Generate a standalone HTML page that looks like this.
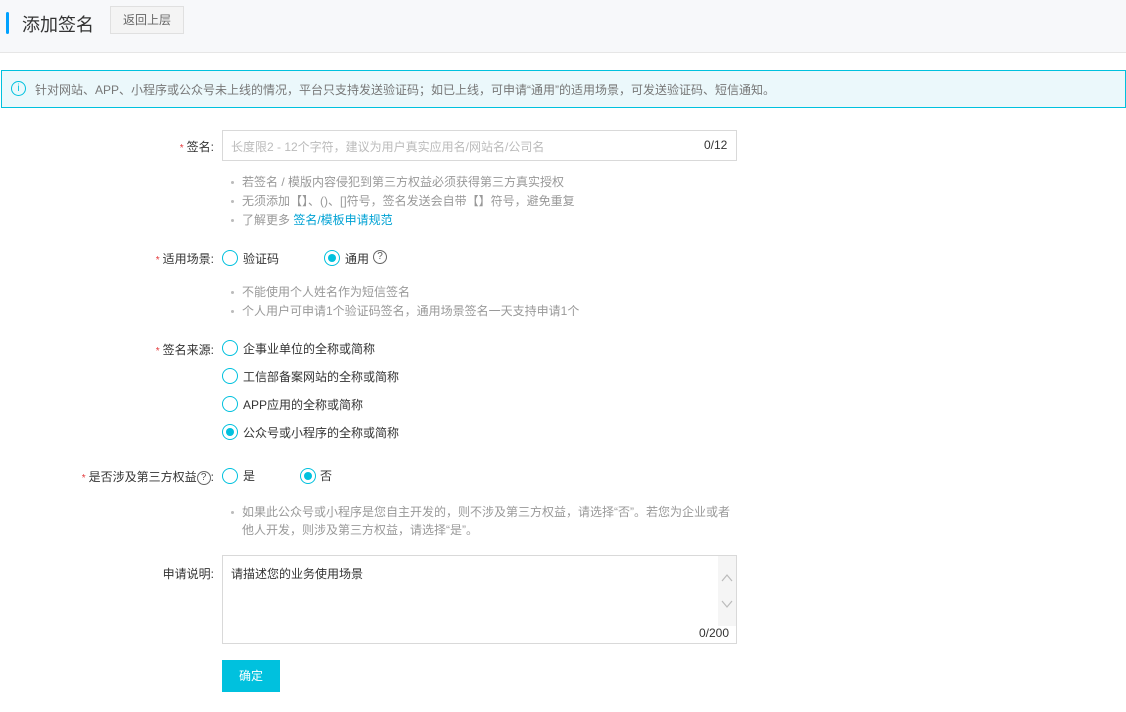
<!DOCTYPE html>
<html><head><meta charset="utf-8"><style>
*{margin:0;padding:0;box-sizing:border-box}
body{width:1126px;height:712px;background:#fff;font-family:"Liberation Sans","Noto Sans CJK SC",sans-serif;font-size:12px;color:#333;position:relative;overflow:hidden}
.a{position:absolute;white-space:nowrap}
.hdr{left:0;top:0;width:1126px;height:53px;background:#f7f8fa;border-bottom:1px solid #e6e6e6}
.lbl{text-align:right;width:200px;color:#333}
.star{color:#e4393c;font-size:10px;margin-right:3px}
.tip{color:#999}
.dot{display:inline-block;width:3px;height:3px;background:#bbb;border-radius:50%;vertical-align:middle;margin-right:8px}
.r{width:16px;height:16px;border:1px solid #00c1de;border-radius:50%;background:#fff}
.r.on::after{content:"";position:absolute;left:3px;top:3px;width:8px;height:8px;border-radius:50%;background:#00c1de}
.q{width:14px;height:14px;border:1px solid #666;border-radius:50%;font-size:10px;line-height:12px;text-align:center;color:#555}
</style></head><body>
<div class="a hdr"></div>
<div class="a" style="left:6px;top:12px;width:3px;height:22px;background:#00a2ff;border-radius:2px"></div>
<div class="a" style="left:22px;top:11px;font-size:18px;color:#333">添加签名</div>
<div class="a" style="left:110px;top:6px;width:74px;height:28px;border:1px solid #e0e0e0;background:#f4f4f4;color:#666;text-align:center;line-height:26px">返回上层</div>

<div class="a" style="left:1px;top:70px;width:1125px;height:38px;border:1px solid #00c1de;background:#ebf8fb"></div>
<div class="a" style="left:11px;top:81px;width:15px;height:15px;border:1px solid #00c1de;border-radius:50%;color:#00c1de;font-size:10px;text-align:center;line-height:13px">i</div>
<div class="a" style="left:35px;top:81px;color:#777">针对网站、APP、小程序或公众号未上线的情况，平台只支持发送验证码；如已上线，可申请“通用”的适用场景，可发送验证码、短信通知。</div>

<div class="a lbl" style="left:14px;top:138px"><span class="star">*</span>签名:</div>
<div class="a" style="left:222px;top:130px;width:515px;height:31px;border:1px solid #d9d9d9"></div>
<div class="a" style="left:231px;top:138px;color:#bbb">长度限2 - 12个字符，建议为用户真实应用名/网站名/公司名</div>
<div class="a" style="left:704px;top:138px;color:#333">0/12</div>
<div class="a tip" style="left:231px;top:173px"><span class="dot"></span>若签名 / 模版内容侵犯到第三方权益必须获得第三方真实授权</div>
<div class="a tip" style="left:231px;top:192px"><span class="dot"></span>无须添加【】、()、[]符号，签名发送会自带【】符号，避免重复</div>
<div class="a tip" style="left:231px;top:211px"><span class="dot"></span>了解更多 <span style="color:#00a2d4">签名/模板申请规范</span></div>

<div class="a lbl" style="left:14px;top:250px"><span class="star">*</span>适用场景:</div>
<div class="a r" style="left:222px;top:250px"></div><div class="a" style="left:243px;top:250px">验证码</div>
<div class="a r on" style="left:324px;top:250px"></div><div class="a" style="left:345px;top:250px">通用</div>
<div class="a q" style="left:373px;top:250px">?</div>
<div class="a tip" style="left:231px;top:283px"><span class="dot"></span>不能使用个人姓名作为短信签名</div>
<div class="a tip" style="left:231px;top:302px"><span class="dot"></span>个人用户可申请1个验证码签名，通用场景签名一天支持申请1个</div>

<div class="a lbl" style="left:14px;top:341px"><span class="star">*</span>签名来源:</div>
<div class="a r" style="left:222px;top:340px"></div><div class="a" style="left:243px;top:340px">企事业单位的全称或简称</div>
<div class="a r" style="left:222px;top:368px"></div><div class="a" style="left:243px;top:368px">工信部备案网站的全称或简称</div>
<div class="a r" style="left:222px;top:396px"></div><div class="a" style="left:243px;top:396px">APP应用的全称或简称</div>
<div class="a r on" style="left:222px;top:424px"></div><div class="a" style="left:243px;top:424px">公众号或小程序的全称或简称</div>

<div class="a lbl" style="left:14px;top:468px"><span class="star">*</span>是否涉及第三方权益<span class="q" style="display:inline-block;position:relative;vertical-align:middle">?</span>:</div>
<div class="a r" style="left:222px;top:468px"></div><div class="a" style="left:243px;top:467px">是</div>
<div class="a r on" style="left:300px;top:468px"></div><div class="a" style="left:320px;top:467px">否</div>
<div class="a tip" style="left:231px;top:503px;line-height:18px"><span class="dot"></span>如果此公众号或小程序是您自主开发的，则不涉及第三方权益，请选择“否”。若您为企业或者<br><span style="margin-left:11px">他人开发，则涉及第三方权益，请选择“是”。</span></div>

<div class="a lbl" style="left:14px;top:565px">申请说明:</div>
<div class="a" style="left:222px;top:555px;width:515px;height:89px;border:1px solid #d9d9d9"></div>
<div class="a" style="left:718px;top:556px;width:18px;height:70px;background:#f5f5f5"></div>
<svg class="a" style="left:720px;top:572px" width="14" height="40" viewBox="0 0 14 40"><path d="M2 9 L7 3 L12 9 M2 29 L7 35 L12 29" fill="none" stroke="#bbb" stroke-width="1.2"/></svg>
<div class="a" style="left:231px;top:565px;color:#333">请描述您的业务使用场景</div>
<div class="a" style="left:699px;top:626px">0/200</div>

<div class="a" style="left:222px;top:660px;width:58px;height:32px;background:#00c1de;color:#fff;text-align:center;line-height:32px">确定</div>
</body></html>
